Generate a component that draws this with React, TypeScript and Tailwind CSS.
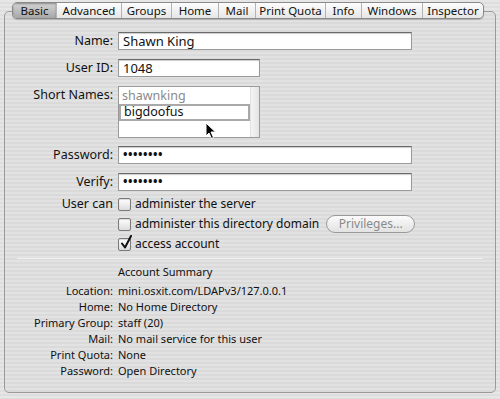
import React from 'react';

const tabs: [string, number][] = [
  ['Basic', 43],
  ['Advanced', 65],
  ['Groups', 50],
  ['Home', 47],
  ['Mail', 37],
  ['Print Quota', 70],
  ['Info', 36],
  ['Windows', 61],
  ['Inspector', 61],
];

const summary = [
  ['Location:', 'mini.osxit.com/LDAPv3/127.0.0.1'],
  ['Home:', 'No Home Directory'],
  ['Primary Group:', 'staff (20)'],
  ['Mail:', 'No mail service for this user'],
  ['Print Quota:', 'None'],
  ['Password:', 'Open Directory'],
];

const Field: React.FC<{ value: string; className?: string; dots?: boolean }> = ({ value, className = '', dots }) => (
  <div
    className={`h-[18px] bg-white border border-[#9a9a9a] border-t-[#6a6a6a] flex items-center px-[4px] shadow-[inset_0_1px_1px_rgba(0,0,0,0.2)] ${className}`}
  >
    <span className={dots ? 'text-[12px] leading-none tracking-[0.5px] font-bold' : 'text-[13px] leading-none'}>{value}</span>
  </div>
);

const Check: React.FC<{ checked?: boolean; label: string }> = ({ checked, label }) => (
  <div className="flex items-center gap-[4px] h-[18px]">
    <div className="relative w-[13px] h-[13px] rounded-[2px] border border-[#7a7a7a] bg-gradient-to-b from-white to-[#dcdcdc] shadow-[inset_0_1px_1px_rgba(0,0,0,0.15)]">
      {checked && (
        <svg className="absolute -top-[4px] left-[1px]" width="13" height="15" viewBox="0 0 13 15">
          <path d="M2 8.5 L5 12.5 L11 1" fill="none" stroke="#111" strokeWidth="2" strokeLinecap="round" strokeLinejoin="round" />
        </svg>
      )}
    </div>
    <span className="text-[12px] leading-none">{label}</span>
  </div>
);

export default function App() {
  return (
    <div
      className="w-[500px] h-[399px] bg-[repeating-linear-gradient(180deg,#e6e6e6_0px,#e6e6e6_2px,#dedede_2px,#dedede_4px)] text-[#111] pt-[2px] px-[4px] overflow-hidden"
      style={{ fontFamily: '"Lucida Grande", "Noto Sans", sans-serif' }}
    >
      <div className="relative">
        <div className="relative z-10 flex ml-[8px] w-fit h-[17px] rounded-[5px] border border-[#8a8a8a] overflow-hidden bg-gradient-to-b from-[#fdfdfd] to-[#e6e6e6] shadow-[0_1px_1px_rgba(0,0,0,0.2)]">
          {tabs.map(([t, w], i) => (
            <div
              key={t}
              style={{ width: w }}
              className={`flex items-center justify-center whitespace-nowrap text-[11.5px] leading-none ${
                i > 0 ? 'border-l border-[#b4b4b4]' : ''
              } ${i === 0 ? 'bg-gradient-to-b from-[#d4d4d4] to-[#a8a8a8] shadow-[inset_0_1px_2px_rgba(0,0,0,0.35)]' : ''}`}
            >
              {t}
            </div>
          ))}
        </div>
        <div className="-mt-[8px] h-[382px] rounded-[5px] border border-[#9a9a9a] bg-[repeating-linear-gradient(180deg,#e2e2e2_0px,#e2e2e2_2px,#dadada_2px,#dadada_4px)] pt-[20px]">
          <div className="grid grid-cols-[108px_1fr] gap-x-[5px] items-start text-[12.5px]">
            <div className="text-right leading-[18px]">Name:</div>
            <Field value="Shawn King" className="w-[294px]" />

            <div className="text-right leading-[18px] mt-[9px]">User ID:</div>
            <Field value="1048" className="w-[142px] mt-[9px]" />

            <div className="text-right leading-[18px] mt-[9px]">Short Names:</div>
            <div className="relative mt-[9px] w-[142px] h-[52px] bg-white border border-[#9a9a9a] flex">
              <div className="flex-1 flex flex-col pt-[1px]">
                <div className="h-[16px] px-[3px] text-[12.5px] leading-none flex items-center text-[#8a8a8a]">shawnking</div>
                <div className="h-[17px] px-[3px] border-2 border-[#a9a9a9] text-[12.5px] leading-none flex items-center">bigdoofus</div>
                <div className="flex-1" />
              </div>
              <div className="w-[9px] bg-gradient-to-r from-[#f4f4f4] to-[#e4e4e4] border-l border-[#e0e0e0]" />
              <svg className="absolute left-[86px] top-[35px]" width="12" height="18" viewBox="0 0 12 18">
                <path d="M1 1 L1 14 L4 11 L6.5 16.5 L8.5 15.5 L6 10 L10.5 10 Z" fill="#000" stroke="#fff" strokeWidth="1" />
              </svg>
            </div>

            <div className="text-right leading-[18px] mt-[8px]">Password:</div>
            <Field value="••••••••" dots className="w-[294px] mt-[8px]" />

            <div className="text-right leading-[18px] mt-[9px]">Verify:</div>
            <Field value="••••••••" dots className="w-[294px] mt-[9px]" />

            <div className="text-right leading-[18px] mt-[4px]">User can</div>
            <div className="mt-[4px] flex flex-col gap-[2px]">
              <Check label="administer the server" />
              <div className="flex items-center gap-[7px]">
                <Check label="administer this directory domain" />
                <div className="h-[18px] w-[89px] rounded-full border border-[#9a9a9a] bg-gradient-to-b from-[#fbfbfb] to-[#e2e2e2] flex items-center justify-center text-[12px] text-[#8a8a8a] leading-none">
                  Privileges...
                </div>
              </div>
              <Check checked label="access account" />
            </div>
          </div>

          <div className="mx-[12px] mt-[5px] h-px bg-[#8c8c8c] border-b border-[#f0f0f0]" />

          <div className="grid grid-cols-[108px_1fr] gap-x-[5px] mt-[5px] text-[11px] leading-[16px]">
            <div />
            <div className="mb-[3px]">Account Summary</div>
            {summary.map(([k, v]) => (
              <React.Fragment key={k}>
                <div className="text-right">{k}</div>
                <div>{v}</div>
              </React.Fragment>
            ))}
          </div>
        </div>
      </div>
    </div>
  );
}
